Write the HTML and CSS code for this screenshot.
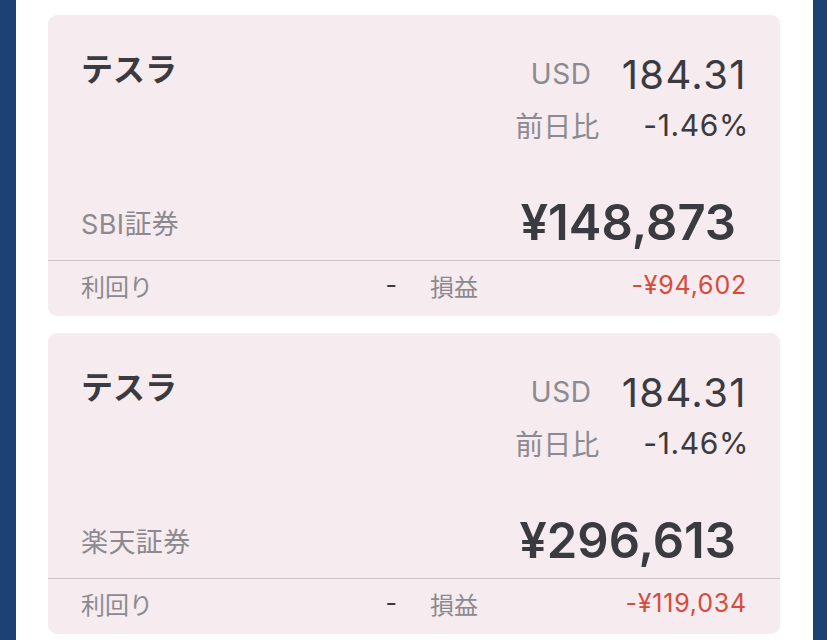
FILE: index.html
```html
<!DOCTYPE html>
<html lang="ja">
<head>
<meta charset="utf-8">
<title>保有銘柄</title>
<link rel="stylesheet" href="styles.css">
</head>
<body>
<div class="frame">
  <div class="panel">
    <section class="card">
      <div class="head">
        <div class="name">テスラ</div>
        <div class="quote">
          <div class="qrow qrow-price"><span class="qlabel">USD</span><span class="price">184.31</span></div>
          <div class="qrow qrow-change"><span class="qlabel cjk">前日比</span><span class="change">-1.46%</span></div>
        </div>
      </div>
      <div class="holding">
        <span class="broker">SBI証券</span>
        <span class="amount">¥148,873</span>
      </div>
      <div class="foot">
        <div class="cell"><span class="flabel">利回り</span><span class="fvalue">-</span></div>
        <div class="cell"><span class="flabel">損益</span><span class="fvalue loss">-¥94,602</span></div>
      </div>
    </section>
    <section class="card">
      <div class="head">
        <div class="name">テスラ</div>
        <div class="quote">
          <div class="qrow qrow-price"><span class="qlabel">USD</span><span class="price">184.31</span></div>
          <div class="qrow qrow-change"><span class="qlabel cjk">前日比</span><span class="change">-1.46%</span></div>
        </div>
      </div>
      <div class="holding">
        <span class="broker">楽天証券</span>
        <span class="amount">¥296,613</span>
      </div>
      <div class="foot">
        <div class="cell"><span class="flabel">利回り</span><span class="fvalue">-</span></div>
        <div class="cell"><span class="flabel">損益</span><span class="fvalue loss">-¥119,034</span></div>
      </div>
    </section>
  </div>
</div>
</body>
</html>
```
FILE: styles.css
```css
* { box-sizing: border-box; }
html, body { margin: 0; padding: 0; }
body {
  background: #1b4272;
  font-family: "Inter", "Noto Sans CJK JP", sans-serif;
  color: #3a3a40;
  height: 640px;
  overflow: hidden;
}
.frame {
  padding: 0 14px 0 16px;
  height: 640px;
}
.panel {
  background: #ffffff;
  height: 640px;
  padding: 15px 33px 0 32px;
  display: flex;
  flex-direction: column;
  gap: 17px;
}
.card {
  background: #f6ebee;
  border-radius: 9px;
  padding: 34px 0 7px 0;
  flex: none;
}
.head {
  display: flex;
  justify-content: space-between;
  align-items: flex-start;
  padding: 0 34px 0 33px;
}
.name {
  font-family: "Noto Sans CJK JP", sans-serif;
  font-weight: 700;
  font-size: 32px;
  line-height: 36px;
  color: #3a3a40;
}
.quote {
  display: flex;
  flex-direction: column;
  align-items: flex-end;
}
.qrow {
  display: flex;
  align-items: center;
  justify-content: flex-end;
}
.qrow-price { height: 50px; gap: 30px; }
.qrow-change { height: 52px; gap: 44px; }
.qlabel {
  color: #8b8a90;
  font-size: 28px;
  font-weight: 400;
  letter-spacing: 0.6px;
}
.qlabel.cjk {
  font-family: "Noto Sans CJK JP", sans-serif;
  font-size: 28px;
  letter-spacing: 0;
}
.price {
  font-size: 40px;
  font-weight: 400;
  letter-spacing: 1.4px;
  margin-right: -1px;
  color: #3a3a40;
}
.change {
  font-size: 30px;
  font-weight: 400;
  letter-spacing: 0.6px;
  margin-right: -3px;
  color: #3a3a40;
}
.holding {
  display: flex;
  justify-content: space-between;
  align-items: center;
  height: 60px;
  margin-top: 41px;
  padding: 0 44px 0 33px;
}
.broker {
  color: #8b8a90;
  font-size: 27px;
  letter-spacing: 0.4px;
  font-family: "Inter", "Noto Sans CJK JP", sans-serif;
}
.amount {
  font-size: 49px;
  font-weight: 600;
  color: #3a3b40;
}
.foot {
  margin-top: 8px;
  border-top: 1px solid #cbc5c8;
  display: grid;
  grid-template-columns: 1fr 1fr;
  column-gap: 33px;
  padding: 0 34px 0 33px;
  height: 49px;
}
.cell {
  display: flex;
  justify-content: space-between;
  align-items: center;
}
.flabel {
  font-family: "Noto Sans CJK JP", sans-serif;
  color: #8b8a90;
  font-size: 24px;
}
.fvalue {
  font-size: 25px;
  color: #3a3a40;
}
.fvalue.loss {
  color: #d84a3b;
  letter-spacing: 0.8px;
  margin-right: -1px;
}
```
